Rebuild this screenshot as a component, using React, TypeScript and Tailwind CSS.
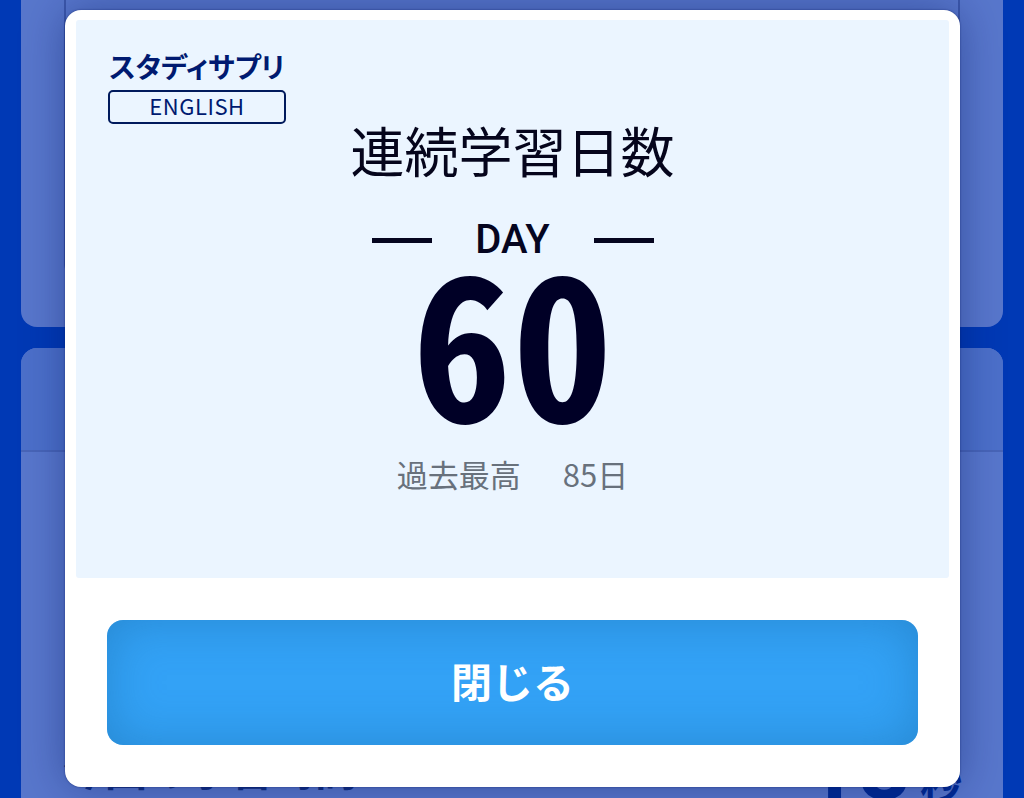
import type { ReactNode } from "react";

function StudyCard({ children, className = "" }: { children?: ReactNode; className?: string }) {
    return (
        <section className={`rounded-2xl bg-[#5877cc] ${className}`}>{children}</section>
    );
}

function Logo() {
    return (
        <div className="w-[178px] text-[#001a70]">
            <p className="whitespace-nowrap text-center text-[28px] font-bold leading-9 [font-feature-settings:'palt']">
                スタディサプリ
            </p>
            <p className="mt-[6px] flex h-[34px] items-center justify-center rounded-[5px] border-2 border-[#001a5c] pb-1 text-[22px] leading-6 tracking-wide">
                ENGLISH
            </p>
        </div>
    );
}

function StudyLog() {
    return (
        <div aria-hidden="true" className="absolute inset-0 overflow-hidden px-[21px]">
            <StudyCard className="h-[327px] rounded-t-none px-[43px]">
                <div className="h-[276px] rounded-b-xl border-x-2 border-[#3c58ab]" />
            </StudyCard>
            <StudyCard className="mt-[21px] h-[600px]">
                <div className="h-[104px] rounded-t-2xl border-b-2 border-[#4865b8] bg-[#4c70ca]" />
                <div className="flex items-start justify-between pl-[42px] pr-[41px] pt-72 text-[42px] font-bold leading-[56px] text-[#102f83]">
                    <span>今回の学習時間</span>
                    <span className="text-[#002a94]">
                        <span className="font-['Roboto'] text-[92px]">18</span> 秒
                    </span>
                </div>
            </StudyCard>
        </div>
    );
}

function StreakPanel({ days, best }: { days: number; best: number }) {
    return (
        <div className="flex min-h-[558px] flex-col items-center rounded-[3px] bg-[#ebf5ff] px-8 pt-7">
            <div className="self-start">
                <Logo />
            </div>
            <h1 className="-mt-[14px] text-[54px] leading-[80px] text-[#05051c]">連続学習日数</h1>
            <div className="mt-[26px] flex items-center text-[#05051f]">
                <span className="h-[5px] w-[60px] bg-current" />
                <span className="w-[162px] text-center font-['Roboto'] text-[40px] font-medium leading-[48px]">
                    DAY
                </span>
                <span className="h-[5px] w-[60px] bg-current" />
            </div>
            <p className="-mt-4 font-['Noto_Sans_Mono_CJK_JP','Roboto',sans-serif] text-[200px] font-bold leading-[176px] text-[#000026]">
                {days}
            </p>
            <p className="mt-6 flex gap-[42px] text-[31px] leading-[52px] text-[#68717c]">
                <span>過去最高</span>
                <span>{best}日</span>
            </p>
        </div>
    );
}

export default function App() {
    return (
        <main
            lang="ja"
            className="relative h-screen overflow-hidden bg-[#0039b5] font-['Noto_Sans_CJK_JP',sans-serif]"
        >
            <StudyLog />
            <div className="relative pl-[65px] pr-16 pt-[10px]">
                <div
                    role="dialog"
                    aria-label="連続学習日数"
                    className="rounded-2xl bg-white px-[11px] pb-[42px] pt-[10px] shadow-[0_0_44px_rgba(0,20,90,0.4),0_0_2px_rgba(0,20,90,0.6)]"
                >
                    <StreakPanel days={60} best={85} />
                    <div className="px-[31px] pt-[42px]">
                        <button
                            type="button"
                            className="h-[125px] w-full rounded-2xl bg-[#33a2f6] pb-1 text-[41px] font-bold text-white shadow-[inset_0_0_50px_rgba(25,105,165,0.45)]"
                        >
                            閉じる
                        </button>
                    </div>
                </div>
            </div>
        </main>
    );
}
